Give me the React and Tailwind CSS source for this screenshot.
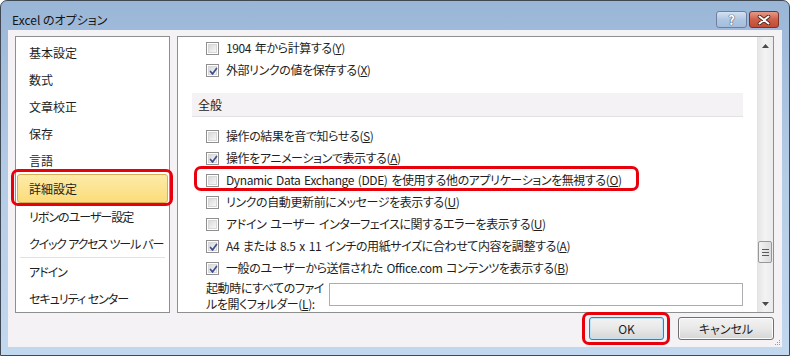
import React from 'react';

const jp = "font-['Noto_Sans_CJK_JP',sans-serif] [font-feature-settings:'palt'_1]";

const navItems = [
  { label: '基本設定', cls: '' },
  { label: '数式', cls: '' },
  { label: '文章校正', cls: '' },
  { label: '保存', cls: '' },
  { label: '言語', cls: '' },
  { label: '詳細設定', selected: true },
  { label: 'リボンのユーザー設定', cls: 'tracking-[-1px]' },
  { label: 'クイック アクセス ツール バー', cls: 'tracking-[-1.2px] [word-spacing:1px]' },
  { separator: true },
  { label: 'アドイン', cls: 'tracking-[-1px]' },
  { label: 'セキュリティ センター', cls: 'tracking-[-1px] [word-spacing:1px]' },
];

const topRows = [
  { label: '1904 年から計算する', key: 'Y' },
  { label: '外部リンクの値を保存する', key: 'X', checked: true },
];

const generalRows = [
  { label: '操作の結果を音で知らせる', key: 'S' },
  { label: '操作をアニメーションで表示する', key: 'A', checked: true },
  { label: 'Dynamic Data Exchange (DDE) を使用する他のアプリケーションを無視する', key: 'O', marked: true },
  { label: 'リンクの自動更新前にメッセージを表示する', key: 'U' },
  { label: 'アドイン ユーザー インターフェイスに関するエラーを表示する', key: 'U' },
  { label: 'A4 または 8.5 x 11 インチの用紙サイズに合わせて内容を調整する', key: 'A', checked: true },
  { label: '一般のユーザーから送信された Office.com コンテンツを表示する', key: 'B', checked: true },
];

const CheckBox = ({ checked }) => (
  <span className="relative block w-[13px] h-[13px] shrink-0 border border-[#8f8f8f] bg-white p-[1px]">
    <span className="block w-full h-full border border-[#d8d8d8] bg-gradient-to-br from-[#d9d9d9] to-[#f8f8f8]" />
    {checked && (
      <svg className="absolute inset-0" width="13" height="13" viewBox="0 0 13 13">
        <path d="M3.5 6.5 L5.5 9 L9.5 3.5" stroke="#3d4f8c" strokeWidth="1.7" fill="none" strokeLinecap="round" strokeLinejoin="round" />
      </svg>
    )}
  </span>
);

const OptionRow = ({ row }) => (
  <div className="relative h-[22px] flex items-center gap-[7px] pl-[14px]">
    <CheckBox checked={row.checked} />
    <span className="whitespace-nowrap tracking-[-0.4px] [word-spacing:1.5px]">
      {row.label}(<span className="underline">{row.key}</span>)
    </span>
    {row.marked && (
      <span className="absolute left-[2px] top-[-3px] w-[445px] h-[25px] border-[3px] border-[#e8000b] rounded-[7px]" />
    )}
  </div>
);

const Arrow = ({ up }) => (
  <svg width="7" height="4" viewBox="0 0 7 4">
    <path d={up ? 'M0 4 L3.5 0 L7 4 Z' : 'M0 0 L3.5 4 L7 0 Z'} fill="#4a4a4a" />
  </svg>
);

export default function App() {
  return (
    <div className={`w-[790px] h-[356px] flex flex-col px-[7px] pb-[8px] border border-[#3f4853] rounded-t-[7px] bg-gradient-to-b from-[#9ab6d7] via-[#b5cce6] to-[#c2d8ef] text-[12px] text-[#1e1e1e] ${jp}`}>
      <div className="h-[29px] flex items-start pt-[10px] pl-[4px] pr-[3px]">
        <span className="h-[17px] leading-[17px] text-[12px] text-[#141414]">Excel のオプション</span>
        <div className="ml-auto flex gap-[2px]">
          <div className="w-[31px] h-[17px] rounded-[3px] border border-[#6d819e] bg-gradient-to-b from-[#d4e2f2] via-[#b0c7e2] to-[#a3bddd] flex items-center justify-center">
            <span className="text-[13px] leading-none font-bold text-white [text-shadow:0_0_1px_#2e3f58,0_0_1px_#2e3f58]">?</span>
          </div>
          <div className="w-[30px] h-[17px] rounded-[3px] border border-[#7b3328] bg-gradient-to-b from-[#e29a89] via-[#cf5f49] to-[#c24c35] flex items-center justify-center">
            <svg width="14" height="10" viewBox="0 0 14 10">
              <path d="M2.5 1.5 L11.5 8.5 M11.5 1.5 L2.5 8.5" stroke="#4a1f18" strokeWidth="3.6" strokeLinecap="round" />
              <path d="M2.5 1.5 L11.5 8.5 M11.5 1.5 L2.5 8.5" stroke="#ffffff" strokeWidth="2" strokeLinecap="round" />
            </svg>
          </div>
        </div>
      </div>

      <div className="relative flex-1 flex flex-col bg-[#f4f2f5] pt-[6px] pl-[7px] pr-[8px] pb-[7px]">
        <div className="h-[277px] flex gap-[7px]">
          <div className="w-[155px] shrink-0 bg-white border border-[#8e8f8f] flex flex-col pt-[2px]">
            {navItems.map((item, i) =>
              item.separator ? (
                <div key={i} className="h-px mx-[4px] bg-[#e2e2e2]" />
              ) : item.selected ? (
                <div key={i} className="relative mx-[1px] h-[29px] flex items-center pl-[11px] rounded-[3px] border border-[#d9ae56] bg-gradient-to-b from-[#fdeba8] to-[#fcdc7a]">
                  {item.label}
                  <span className="absolute left-[-7px] right-[-6px] top-[-6px] bottom-[-4px] border-[3px] border-[#e8000b] rounded-[7px]" />
                </div>
              ) : (
                <div key={i} className={`h-[27px] flex items-center pl-[13px] whitespace-nowrap ${item.cls}`}>
                  {item.label}
                </div>
              )
            )}
          </div>

          <div className="flex-1 bg-white border border-[#8e8f8f] flex overflow-hidden">
            <div className="flex-1 flex flex-col px-[14px]">
              {topRows.map((row, i) => (
                <OptionRow key={i} row={row} />
              ))}
              <div className="mt-[12px] h-[24px] border-b border-[#e2e2e2] bg-[#f4f2f5] flex items-center pl-[6px]">
                全般
              </div>
              <div className="mt-[8px] flex flex-col">
                {generalRows.map((row, i) => (
                  <OptionRow key={i} row={row} />
                ))}
              </div>
              <div className="mt-[1px] flex items-start">
                <div className="pl-[14px] leading-[16px] whitespace-nowrap tracking-[-0.4px]">
                  起動時にすべてのファイ
                  <br />
                  ルを開くフォルダー(<span className="underline">L</span>):
                </div>
                <div className="ml-auto mt-[3px] w-[414px] h-[23px] border border-[#abadb3] bg-white" />
              </div>
            </div>

            <div className="w-[16px] shrink-0 flex flex-col bg-gradient-to-r from-[#e3e3e3] via-[#f3f3f3] to-[#ebebeb]">
              <div className="h-[17px] flex items-center justify-center">
                <Arrow up />
              </div>
              <div className="flex-1 flex flex-col pt-[187px]">
                <div className="h-[22px] mx-[1px] rounded-[2px] border border-[#979797] bg-gradient-to-r from-[#f3f3f3] to-[#dcdcdc] flex flex-col items-center justify-center gap-[2px]">
                  <span className="block w-[7px] h-px bg-[#5a5a5a]" />
                  <span className="block w-[7px] h-px bg-[#5a5a5a]" />
                  <span className="block w-[7px] h-px bg-[#5a5a5a]" />
                </div>
              </div>
              <div className="h-[17px] flex items-center justify-center">
                <Arrow />
              </div>
            </div>
          </div>
        </div>

        <div className="mt-[4px] h-[23px] flex justify-end gap-[14px]">
          <div className="relative w-[75px] h-[23px] rounded-[3px] border border-[#3c7fb1] bg-gradient-to-b from-[#f3f3f3] via-[#e8e8e8] to-[#d6d6d6] [box-shadow:inset_0_0_0_1px_#bfe3f8] flex items-center justify-center">
            OK
            <span className="absolute left-[-8px] right-[-7px] top-[-6px] bottom-[-6px] border-[3px] border-[#e8000b] rounded-[7px]" />
          </div>
          <div className="w-[96px] h-[23px] rounded-[3px] border border-[#707070] bg-gradient-to-b from-[#f3f3f3] via-[#e8e8e8] to-[#d6d6d6] [box-shadow:inset_0_0_0_1px_#fbfbfb] flex items-center justify-center">
            キャンセル
          </div>
        </div>

        <svg className="absolute right-[1px] bottom-[1px]" width="7" height="7" viewBox="0 0 7 7">
          <rect x="5" y="1" width="1" height="1" fill="#9a9a9a" />
          <rect x="3" y="3" width="1" height="1" fill="#9a9a9a" />
          <rect x="5" y="3" width="1" height="1" fill="#9a9a9a" />
          <rect x="1" y="5" width="1" height="1" fill="#9a9a9a" />
          <rect x="3" y="5" width="1" height="1" fill="#9a9a9a" />
          <rect x="5" y="5" width="1" height="1" fill="#9a9a9a" />
        </svg>
      </div>
    </div>
  );
}
